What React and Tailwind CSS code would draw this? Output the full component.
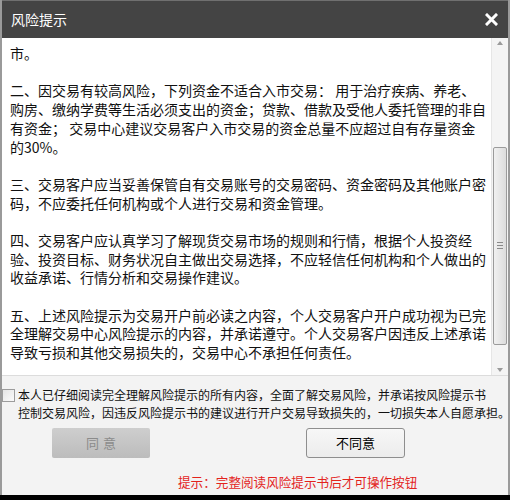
import React from 'react';

const FONT = { fontFamily: '"Noto Sans CJK SC", "Noto Sans", sans-serif' };

const PARAGRAPHS = [
  '市。',
  '二、因交易有较高风险，下列资金不适合入市交易： 用于治疗疾病、养老、购房、缴纳学费等生活必须支出的资金；贷款、借款及受他人委托管理的非自有资金； 交易中心建议交易客户入市交易的资金总量不应超过自有存量资金的30%。',
  '三、交易客户应当妥善保管自有交易账号的交易密码、资金密码及其他账户密码，不应委托任何机构或个人进行交易和资金管理。',
  '四、交易客户应认真学习了解现货交易市场的规则和行情，根据个人投资经验、投资目标、财务状况自主做出交易选择，不应轻信任何机构和个人做出的收益承诺、行情分析和交易操作建议。',
  '五、上述风险提示为交易开户前必读之内容，个人交易客户开户成功视为已完全理解交易中心风险提示的内容，并承诺遵守。个人交易客户因违反上述承诺导致亏损和其他交易损失的，交易中心不承担任何责任。',
];

// fake windows-classic scrollbar
const ScrollBar = () => (
  <div className="w-[17px] flex flex-col bg-[#f4f4f4] border-l border-[#e6e6e6]">
    <div className="h-[18px] flex items-center justify-center">
      <div className="w-0 h-0 border-x-[3px] border-x-transparent border-b-[4px] border-b-[#9a9a9a]" />
    </div>
    <div className="flex-1 flex flex-col pt-[98px] pb-[20px]">
      <div className="h-[198px] mx-[1px] rounded-[2px] border border-[#9b9b9b] bg-gradient-to-r from-[#f1f1f1] to-[#dcdcdc] flex flex-col items-center justify-center gap-[2px]">
        <div className="w-[6px] h-px bg-[#8a8a8a]" />
        <div className="w-[6px] h-px bg-[#8a8a8a]" />
        <div className="w-[6px] h-px bg-[#8a8a8a]" />
      </div>
    </div>
    <div className="h-[18px] flex items-center justify-center">
      <div className="w-0 h-0 border-x-[3px] border-x-transparent border-t-[4px] border-t-[#9a9a9a]" />
    </div>
  </div>
);

export default function App() {
  return (
    <div className="w-[510px] h-[500px] bg-black" style={FONT}>
      <div className="h-[495px] flex flex-col bg-[#f3f3f3] border-x-2 border-[#9a9a9a] overflow-hidden">
        {/* title bar */}
        <div className="h-[38px] shrink-0 flex items-center justify-between bg-[#444444] border-t border-[#707070] pl-[9px] pr-[10px]">
          <span className="text-[14px] text-white">风险提示</span>
          <svg width="13" height="13" viewBox="0 0 13 13">
            <path d="M2 2 L11 11 M11 2 L2 11" stroke="#ffffff" strokeWidth="3" strokeLinecap="square" />
          </svg>
        </div>

        {/* scrolled notice text */}
        <div className="h-[338px] shrink-0 flex bg-white border-b border-[#dcdcdc]">
          <div className="flex-1 overflow-hidden pl-[8px] pr-[4px] pt-[6px]">
            {PARAGRAPHS.map((p, i) => (
              <p key={i} className="text-[14px] leading-[18.7px] text-[#111] mb-[18.7px] break-all">{p}</p>
            ))}
          </div>
          <ScrollBar />
        </div>

        {/* agreement */}
        <div className="flex-1 flex flex-col">
          <label className="flex items-start gap-[3px] pt-[10px]">
            <span className="mt-[3px] w-[13px] h-[13px] shrink-0 border border-[#9c9c9c] bg-gradient-to-br from-[#e4e4e4] to-[#fbfbfb]" />
            <span className="text-[12px] leading-[18px] text-[#111] whitespace-nowrap">
              本人已仔细阅读完全理解风险提示的所有内容，全面了解交易风险，并承诺按风险提示书<br />控制交易风险，因违反风险提示书的建议进行开户交易导致损失的，一切损失本人自愿承担。
            </span>
          </label>
          <div className="flex mt-[6px] pl-[50px]">
            <button disabled className="w-[98px] h-[30px] rounded-[2px] bg-gradient-to-b from-[#cecece] to-[#bcbcbc] text-[13px] text-[#8b8b8b] tracking-[4px] pl-[4px]">
              同意
            </button>
            <button className="ml-[156px] w-[99px] h-[30px] rounded-[3px] border border-[#8e8e8e] bg-gradient-to-b from-[#f7f7f7] to-[#ececec] text-[13px] text-black">
              不同意
            </button>
          </div>
          <div className="mt-[15px] pl-[176px] text-[12.6px] leading-[18px] text-[#e3231c]">
            提示：完整阅读风险提示书后才可操作按钮
          </div>
        </div>
      </div>
    </div>
  );
}
